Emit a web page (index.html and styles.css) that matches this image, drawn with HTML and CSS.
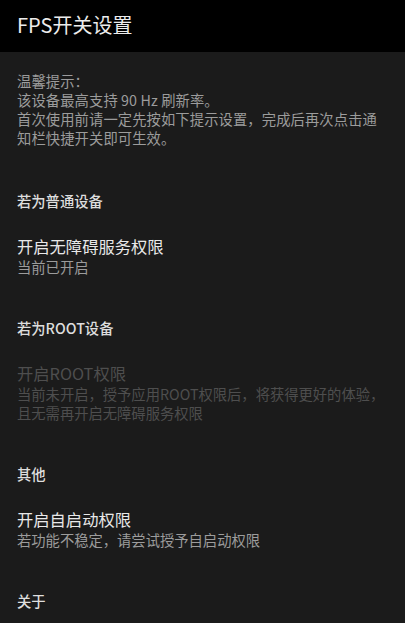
FILE: index.html
```html
<!DOCTYPE html>
<html lang="zh-CN">
<head>
<meta charset="utf-8">
<title>FPS开关设置</title>
<link rel="stylesheet" href="styles.css">
</head>
<body>
<header class="appbar">
  <h1 class="appbar-title">FPS开关设置</h1>
</header>
<main class="content">
  <p class="tip">温馨提示：<br>该设备最高支持 90 Hz 刷新率。<br>首次使用前请一定先按如下提示设置，完成后再次点击通<br>知栏快捷开关即可生效。</p>

  <section class="group">
    <h2 class="category">若为普通设备</h2>
    <div class="pref">
      <div class="pref-title">开启无障碍服务权限</div>
      <div class="pref-summary">当前已开启</div>
    </div>
  </section>

  <section class="group">
    <h2 class="category">若为ROOT设备</h2>
    <div class="pref disabled">
      <div class="pref-title">开启ROOT权限</div>
      <div class="pref-summary">当前未开启，授予应用ROOT权限后，将获得更好的体验，<br>且无需再开启无障碍服务权限</div>
    </div>
  </section>

  <section class="group">
    <h2 class="category">其他</h2>
    <div class="pref">
      <div class="pref-title">开启自启动权限</div>
      <div class="pref-summary">若功能不稳定，请尝试授予自启动权限</div>
    </div>
  </section>

  <section class="group">
    <h2 class="category">关于</h2>
  </section>
</main>
</body>
</html>
```

FILE: styles.css
```css
html, body {
  margin: 0;
  padding: 0;
  background: #1b1b1b;
  font-family: "Noto Sans CJK SC", "Noto Sans", sans-serif;
  color: #e6e6e6;
  height: 100%;
  overflow: hidden;
}

.appbar {
  height: 52px;
  background: #000;
  display: flex;
  align-items: center;
  padding: 0 17px;
  box-sizing: border-box;
}

.appbar-title {
  margin: 0;
  font-size: 20px;
  font-weight: 400;
  line-height: 24px;
  color: #ececec;
  position: relative;
  top: -1px;
}

.content {
  padding: 0 17px;
}

.tip {
  margin: 19px 0 0;
  font-size: 14.3px;
  line-height: 19px;
  color: #9c9c9c;
  letter-spacing: 0.1px;
}

.group {
  padding-top: 42px;
}

.group:first-of-type {
  padding-top: 44px;
}

.category {
  margin: 0;
  font-size: 14.3px;
  font-weight: 500;
  line-height: 20px;
  color: #dedede;
}

.pref {
  padding-top: 25px;
}

.pref-title {
  font-size: 16.3px;
  line-height: 20px;
  color: #e8e8e8;
}

.pref-summary {
  font-size: 14.3px;
  line-height: 19px;
  color: #9c9c9c;
  margin-top: 1px;
}

.pref.disabled .pref-title,
.pref.disabled .pref-summary {
  color: #4e4e4e;
}
```
